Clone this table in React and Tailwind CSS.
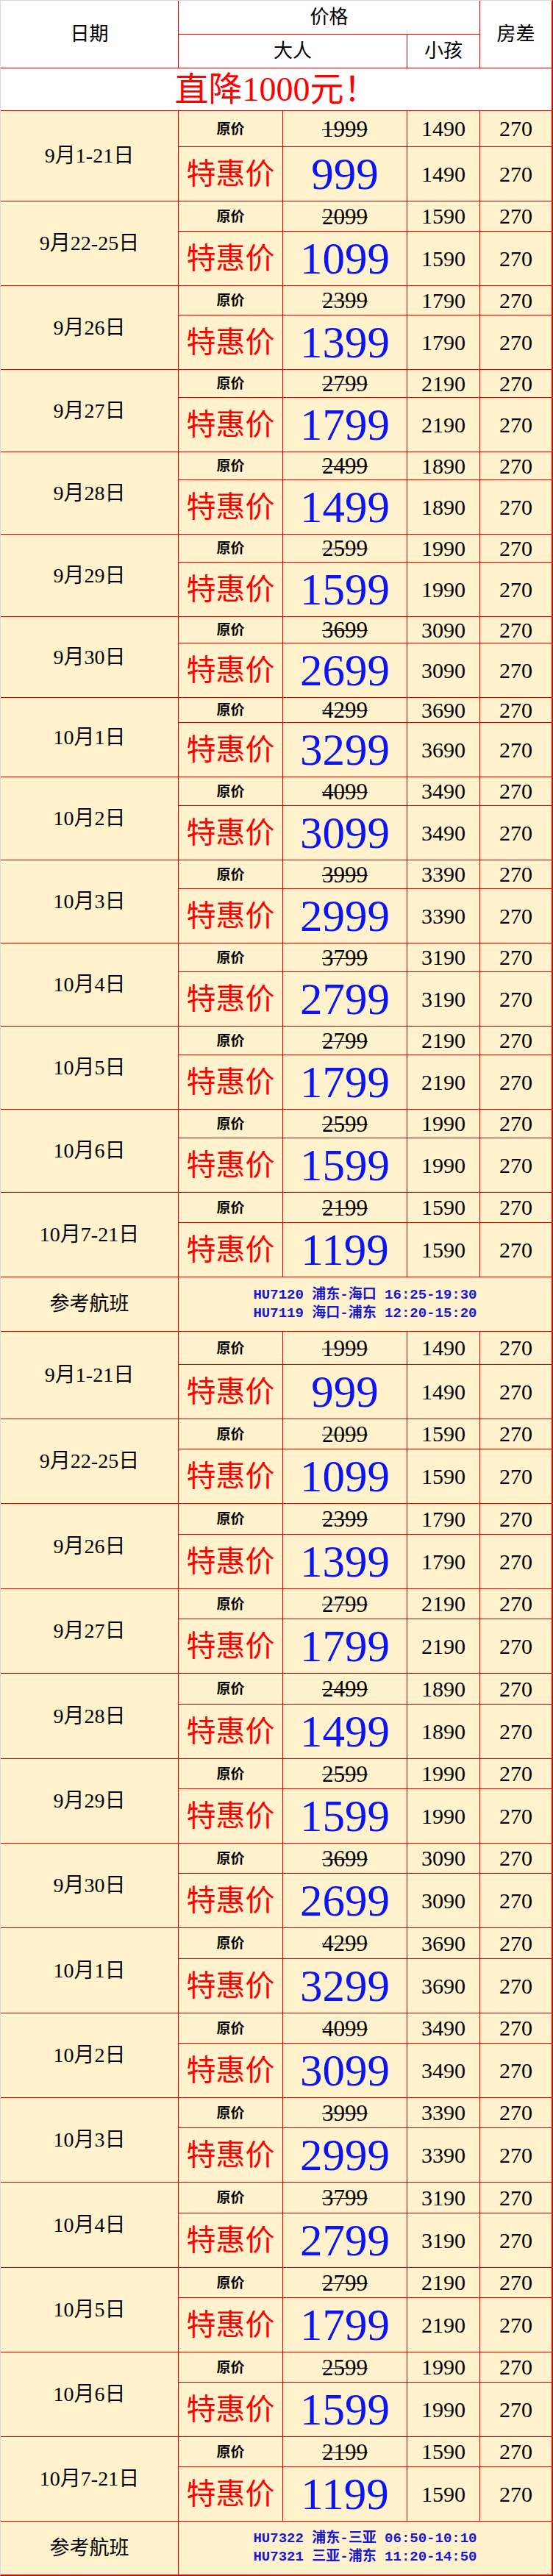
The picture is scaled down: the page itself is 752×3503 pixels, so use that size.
import React from 'react';

const groups = [
    { date: '9月1-21日', old: 1999, deal: 999, kid: 1490 },
    { date: '9月22-25日', old: 2099, deal: 1099, kid: 1590 },
    { date: '9月26日', old: 2399, deal: 1399, kid: 1790 },
    { date: '9月27日', old: 2799, deal: 1799, kid: 2190 },
    { date: '9月28日', old: 2499, deal: 1499, kid: 1890 },
    { date: '9月29日', old: 2599, deal: 1599, kid: 1990 },
    { date: '9月30日', old: 3699, deal: 2699, kid: 3090 },
    { date: '10月1日', old: 4299, deal: 3299, kid: 3690 },
    { date: '10月2日', old: 4099, deal: 3099, kid: 3490 },
    { date: '10月3日', old: 3999, deal: 2999, kid: 3390 },
    { date: '10月4日', old: 3799, deal: 2799, kid: 3190 },
    { date: '10月5日', old: 2799, deal: 1799, kid: 2190 },
    { date: '10月6日', old: 2599, deal: 1599, kid: 1990 },
    { date: '10月7-21日', old: 2199, deal: 1199, kid: 1590 },
];

// heights of the 原价 row, read off the screenshot
const topRows1 = [49, 41, 40, 38, 38, 38, 36, 34, 39, 39, 39, 39, 39, 41];
const topRows2 = [45, 41, 42, 41, 42, 41, 41, 42, 41, 41, 42, 41, 41, 41];

const sections = [
    {
        rows: topRows1,
        flights: ['HU7120 浦东-海口 16:25-19:30', 'HU7119 海口-浦东 12:20-15:20'],
    },
    {
        rows: topRows2,
        flights: ['HU7322 浦东-三亚 06:50-10:10', 'HU7321 三亚-浦东 11:20-14:50'],
        last: true,
    },
];

const cell = 'flex items-center justify-center border-r border-b border-[#e00000] leading-none';
const lastCell = 'flex items-center justify-center border-b border-[#e00000] leading-none';

const Group = ({ g, top }) => (
    <div
        className="grid grid-cols-[242px_142px_169px_99px_1fr] bg-[#fff2cc] text-black"
        style={{ gridTemplateRows: `${top}px 74px` }}
    >
        <div className={`${cell} row-span-2 text-[28px]`}>{g.date}</div>
        <div className={`${cell} text-[19px] font-bold`}>原价</div>
        <div className={`${cell} text-[31px]`}><span className="line-through decoration-1">{g.old}</span></div>
        <div className={`${cell} text-[30px]`}>{g.kid}</div>
        <div className={`${lastCell} text-[30px]`}>270</div>
        <div className={`${cell} text-[40px] text-[#ff0000]`}>特惠价</div>
        <div className={`${cell} text-[61px] text-[#0a14f5]`}>{g.deal}</div>
        <div className={`${cell} text-[30px]`}>{g.kid}</div>
        <div className={`${lastCell} text-[30px]`}>270</div>
    </div>
);

const Flights = ({ lines, last }) => (
    <div className={`grid grid-cols-[242px_1fr] bg-[#fff2cc] ${last ? 'h-[72px]' : 'h-[74px]'}`}>
        <div className={`flex items-center justify-center border-r border-[#e00000] text-[27px] leading-none ${last ? '' : 'border-b'}`}>
            参考航班
        </div>
        <div className={`flex flex-col items-center justify-center border-[#e00000] font-['Liberation_Mono','Noto_Sans_CJK_SC',monospace] text-[19px] font-bold leading-[25px] text-[#1717d8] ${last ? '' : 'border-b'}`}>
            {lines.map(l => (
                <div key={l} className="whitespace-pre">{l}</div>
            ))}
        </div>
    </div>
);

const App = () => {
    return (
        <div className="w-[752px] bg-white font-['Liberation_Serif','Noto_Sans_CJK_SC',serif] border-l border-t border-l-[#d9d9d9] border-t-[#d9d9d9] border-r-2 border-r-[#e00000] border-b-2 border-b-[#e00000]">
            <div className="grid grid-cols-[242px_311px_99px_1fr] grid-rows-[46px_46px] bg-white text-[26px]">
                <div className={`${cell} row-span-2`}>日期</div>
                <div className={`${cell} col-span-2`}>价格</div>
                <div className={`${lastCell} row-span-2`}>房差</div>
                <div className={cell}>大人</div>
                <div className={cell}>小孩</div>
            </div>
            <div className="flex h-[58px] items-center justify-center border-b border-[#e00000] bg-white text-[46px] leading-none text-[#ff0000]">
                直降1000元！
            </div>
            {sections.map((s, si) => (
                <div key={si}>
                    {groups.map((g, i) => (
                        <Group key={g.date} g={g} top={s.rows[i]} />
                    ))}
                    <Flights lines={s.flights} last={s.last} />
                </div>
            ))}
        </div>
    );
};

export default App;
